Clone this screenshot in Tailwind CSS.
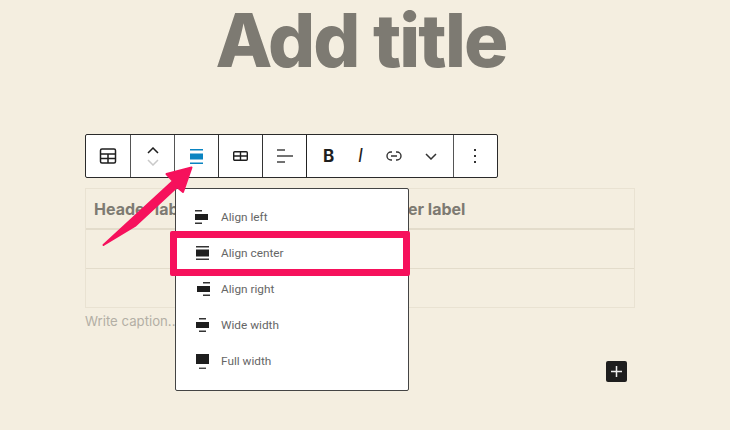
<!DOCTYPE html>
<html>
<head>
<meta charset="utf-8">
<script src="https://cdn.jsdelivr.net/npm/@tailwindcss/browser@4"></script>
</head>
<body class="m-0 bg-[#f4eee0]">
<div class="relative w-[730px] h-[430px] overflow-hidden bg-[#f4eee0] font-['Inter',sans-serif]">

  <h1 class="h-[134px] w-[722px] text-center text-[74px] leading-[80px] font-extrabold tracking-[-1.9px] text-[#7d7a72]">Add title</h1>

  <!-- toolbar -->
  <div class="ml-[85px] flex h-[44px] w-[413px] rounded-[2px] border border-[#2a2a2a] bg-white text-[#1e1e1e]">
    <div class="flex w-[45px] items-center justify-center border-r border-[#555]">
      <svg width="18" height="18" viewBox="0 0 18 18" fill="none" stroke="#1e1e1e" stroke-width="1.5"><rect x="1.5" y="2" width="15" height="14" rx="1.5"/><path d="M1.5 7h15M1.5 11.5h15M9 7v9"/></svg>
    </div>
    <div class="flex w-[44px] flex-col items-center justify-center gap-[5px] border-r border-[#555]">
      <svg width="12" height="7" viewBox="0 0 12 7" fill="none" stroke="#1e1e1e" stroke-width="1.5"><path d="M1 6l5-5 5 5"/></svg>
      <svg width="12" height="7" viewBox="0 0 12 7" fill="none" stroke="#c9c9c9" stroke-width="1.5"><path d="M1 1l5 5 5-5"/></svg>
    </div>
    <div class="flex w-[44px] items-center justify-center border-r border-[#333]">
      <svg width="13" height="15" viewBox="0 0 13 15"><path d="M0 .75h13M0 14.25h13" stroke="#0a84c1" stroke-width="1.5"/><rect y="4.5" width="13" height="6" fill="#0a84c1"/></svg>
    </div>
    <div class="flex w-[44px] items-center justify-center border-r border-[#333]">
      <svg width="15" height="10" viewBox="0 0 15 10" fill="none" stroke="#1e1e1e" stroke-width="1.4"><rect x=".7" y=".7" width="13.6" height="8.6" rx="1"/><path d="M.7 5h13.6M7.5 1v8"/></svg>
    </div>
    <div class="flex w-[44px] items-center justify-center border-r border-[#222]">
      <svg width="16" height="14" viewBox="0 0 16 14" fill="none" stroke="#444" stroke-width="1.4"><path d="M0 1h8M0 7h16M0 13h8"/></svg>
    </div>
    <div class="flex w-[147px] items-center border-r border-[#555]">
      <span class="ml-[16px] w-[14px] text-[17px] font-bold leading-none text-[#1e1e1e]">B</span>
      <span class="ml-[21px] w-[10px] text-[18px] font-normal italic leading-none text-[#1e1e1e]">I</span>
      <svg class="ml-[18px]" width="16" height="10" viewBox="0 0 16 10" fill="none" stroke="#333" stroke-width="1.4"><path d="M6 1H5a4 4 0 0 0 0 8h1M10 1h1a4 4 0 0 1 0 8h-1M5 5h6"/></svg>
      <svg class="ml-[23px]" width="12" height="7" viewBox="0 0 12 7" fill="none" stroke="#333" stroke-width="1.5"><path d="M1 1l5 5 5-5"/></svg>
    </div>
    <div class="flex flex-1 items-center justify-center pr-[2px]">
      <svg width="4" height="14" viewBox="0 0 4 14" fill="#333"><rect x="1" y="0" width="2" height="2"/><rect x="1" y="6" width="2" height="2"/><rect x="1" y="12" width="2" height="2"/></svg>
    </div>
  </div>

  <!-- table -->
  <div class="ml-[85px] mt-[10px] w-[550px] border border-[#e9e2d2] text-[#7d7a72]">
    <div class="flex h-[41px] items-center border-b-2 border-[#e3dccb] pl-[8px] text-[16px] font-bold leading-none">
      <span class="w-[273px]">Header label</span><span>Header label</span>
    </div>
    <div class="h-[39px] border-b border-[#e3dccb]"></div>
    <div class="h-[38px]"></div>
  </div>
  <div class="ml-[85px] mt-[5px] text-[13.2px] leading-[16px] text-[#b3afa5]">Write caption...</div>

  <!-- add block -->
  <div class="absolute left-[606px] top-[361px] flex h-[21px] w-[21px] items-center justify-center rounded-[2px] bg-[#1e1e1e]">
    <svg width="13" height="13" viewBox="0 0 13 13" stroke="#eee" stroke-width="1.5"><path d="M6.5 1v11M1 6.5h11"/></svg>
  </div>

  <!-- popover -->
  <div class="absolute left-[175px] top-[188px] flex h-[203px] w-[234px] flex-col rounded-[2px] border border-[#444] bg-white pt-[10px] font-['Roboto',sans-serif] text-[11.8px] text-[#666]">
    <div class="flex h-[36px] items-center pl-[19px]">
      <svg width="13" height="14" viewBox="0 0 13 14"><path d="M0 .75h7M0 13.25h7" stroke="#333" stroke-width="1.3"/><rect y="4" width="13" height="6" fill="#1e1e1e"/></svg>
      <span class="ml-[13px] mt-[2px]">Align left</span>
    </div>
    <div class="flex h-[36px] items-center pl-[20px]">
      <svg width="13" height="14" viewBox="0 0 13 14"><path d="M0 .75h13M0 13.25h13" stroke="#333" stroke-width="1.3"/><rect y="3.5" width="13" height="7" fill="#1e1e1e"/></svg>
      <span class="ml-[12px] mt-[2px]">Align center</span>
    </div>
    <div class="flex h-[36px] items-center pl-[21px]">
      <svg width="13" height="14" viewBox="0 0 13 14"><path d="M6 .75h7M6 13.25h7" stroke="#333" stroke-width="1.3"/><rect y="4" width="13" height="6" fill="#1e1e1e"/></svg>
      <span class="ml-[11px] mt-[2px]">Align right</span>
    </div>
    <div class="flex h-[36px] items-center pl-[20px]">
      <svg width="13" height="14" viewBox="0 0 13 14"><path d="M3 .75h7M3 13.25h7" stroke="#333" stroke-width="1.3"/><rect y="4" width="13" height="6" fill="#1e1e1e"/></svg>
      <span class="ml-[12px] mt-[2px]">Wide width</span>
    </div>
    <div class="flex h-[36px] items-center pl-[20px]">
      <svg width="13" height="15" viewBox="0 0 13 15"><rect width="13" height="10" fill="#1e1e1e"/><path d="M3 14.25h7" stroke="#333" stroke-width="1.3"/></svg>
      <span class="ml-[12px] mt-[2px]">Full width</span>
    </div>
  </div>

  <!-- annotation: highlight -->
  <div class="absolute left-[170px] top-[231px] h-[45px] w-[240px] rounded-[2px] border-[7px] border-[#f6115c]"></div>

  <!-- annotation: arrow -->
  <svg class="absolute left-0 top-0" width="730" height="430" viewBox="0 0 730 430">
    <path d="M103.500 245 L173 181 L166.500 174 L191.500 167.500 L183 192 L177 187 L135 226 Z" fill="#f6115c" stroke="#f6115c" stroke-width="2" stroke-linejoin="round"/>
  </svg>
</div>
</body>
</html>
